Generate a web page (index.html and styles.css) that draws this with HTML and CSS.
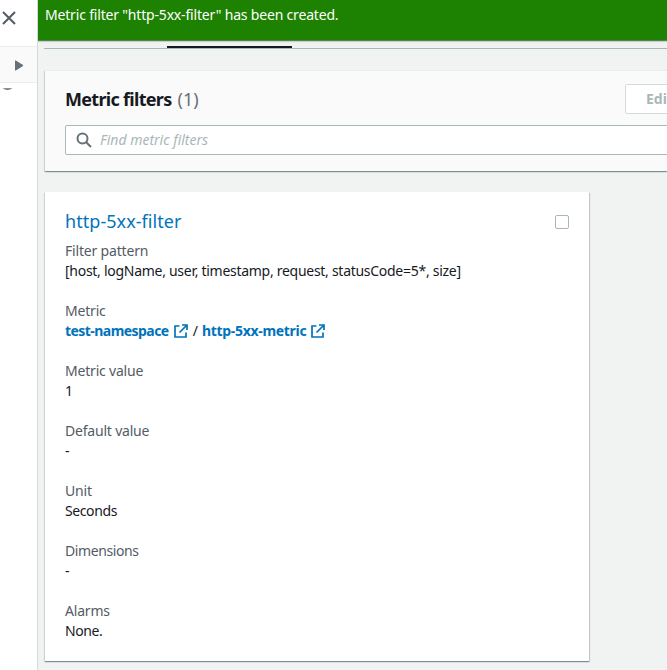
FILE: index.html
```html
<!DOCTYPE html>
<html lang="en">
<head>
<meta charset="utf-8">
<title>Metric filters</title>
<link rel="stylesheet" href="styles.css">
</head>
<body>
<div class="app">
  <aside class="rail">
    <div class="rail-close"><svg width="14" height="14" viewBox="0 0 14 14"><path d="M1 1l12 12M13 1L1 13" fill="none" stroke="#545b64" stroke-width="2"/></svg></div>
    <div class="rail-expand"><svg width="9" height="11" viewBox="0 0 9 11"><path d="M.5.8L8 5.500.5 10.200z" fill="#687078" stroke="#687078" stroke-linejoin="round"/></svg></div>
    <svg class="rail-arc" width="12" height="3" viewBox="0 0 12 3"><path d="M.5.300Q5.500 3.500 10.500.300z" fill="#687078"/></svg>
  </aside>
  <main class="main">
    <div class="banner"><span class="t-banner">Metric filter "http-5xx-filter" has been created.</span></div>
    <div class="tabs"><div class="tab-active"></div></div>
    <section class="panel header">
      <div class="title-row">
        <h2><span class="t-title">Metric filters</span><span class="count">(1)</span></h2>
        <button class="edit" disabled>Edit</button>
      </div>
      <div class="search">
        <svg width="16" height="16" viewBox="0 0 16 16"><g fill="none" stroke="#687078" stroke-width="2"><circle cx="6.500" cy="6.500" r="5"/><path d="M10.200 10.200L15 15"/></g></svg>
        <span class="t-find">Find metric filters</span>
      </div>
    </section>
    <section class="panel card">
      <div class="card-head"><a class="t-name">http-5xx-filter</a><span class="check"></span></div>
      <dl>
        <dt><span class="k1">Filter pattern</span></dt><dd><span class="v1">[host, logName, user, timestamp, request, statusCode=5*, size]</span></dd>
        <dt><span class="k2">Metric</span></dt>
        <dd class="links"><a class="l1">test-namespace</a><svg width="14" height="14" viewBox="0 0 14 14"><path d="M5.500 2H1v11h11V8.500M8 1h5v5M13 1L5.500 8.500" fill="none" stroke="#0073bb" stroke-width="1.700"/></svg><span class="slash">/</span><a class="l2">http-5xx-metric</a><svg width="14" height="14" viewBox="0 0 14 14"><path d="M5.500 2H1v11h11V8.500M8 1h5v5M13 1L5.500 8.500" fill="none" stroke="#0073bb" stroke-width="1.700"/></svg></dd>
        <dt><span class="k3">Metric value</span></dt><dd>1</dd>
        <dt><span class="k4">Default value</span></dt><dd>-</dd>
        <dt><span class="k5">Unit</span></dt><dd><span class="v5">Seconds</span></dd>
        <dt><span class="k6">Dimensions</span></dt><dd>-</dd>
        <dt><span class="k7">Alarms</span></dt><dd><span class="v7">None.</span></dd>
      </dl>
    </section>
  </main>
</div>
</body>
</html>
```
FILE: styles.css
```css
* { box-sizing: border-box; }
body { margin: 0; font: 14px/20px "Noto Sans", sans-serif; color: #16191f; background: #f1f3f3; overflow: hidden; }
.app { display: flex; width: 667px; height: 670px; overflow: hidden; }
.rail { width: 38px; flex: none; background: #fff; border-right: 1px solid #d5dbdb; }
.rail-close { height: 46px; padding: 11px 0 0 2px; }
.rail-expand { height: 37px; padding: 13px 0 0 15px; background: #fafafa; border: solid #eaeded; border-width: 1px 0; }
.rail svg { display: block; }
.rail-arc { margin: 5px 0 0 2px; }
.main { flex: 1; min-width: 0; }
.banner { height: 41px; padding: 5px 7px; background: #1d8102; border-bottom: 1px solid #55834b; color: #fff; white-space: nowrap; box-shadow: 0 1px 1px #c7d1cb; }
.t-banner { letter-spacing: -.18px; }
.tabs { height: 8px; margin-left: 6px; border-bottom: 1px solid #aab7b8; padding: 5px 0 0 123px; }
.tab-active { width: 125px; height: 2px; background: #16191f; }
.panel { margin-left: 7px; box-shadow: 0 1px 1px rgba(0,28,36,.3), 1px 1px 1px rgba(0,28,36,.15), -1px 1px 1px rgba(0,28,36,.1); }
.header { height: 101px; margin-top: 21px; background: #fafafa; border-top: 1px solid #eaeded; padding: 13px 0 0 20px; }
.title-row { display: flex; justify-content: space-between; height: 41px; }
h2 { margin: 0; font-size: 18px; line-height: 30px; font-weight: 700; white-space: nowrap; }
.t-title { letter-spacing: -.7px; }
.count { font-weight: 400; color: #687078; margin-left: 6px; }
.edit { width: 80px; height: 30px; margin-right: -38px; padding: 0 0 0 20px; text-align: left; background: #fff; border: 1px solid #d5dbdb; border-radius: 2px; font: 700 14px/28px "Noto Sans", sans-serif; color: #aab7b8; }
.search { display: flex; align-items: center; height: 30px; margin-right: -4px; padding-left: 10px; gap: 8px; background: #fff; border: 1px solid #aab7b8; border-radius: 2px; color: #aab7b8; font-style: italic; }
.card { width: 544px; height: 469px; margin-top: 21px; padding: 20px; background: #fff; }
.card-head { display: flex; justify-content: space-between; height: 29px; line-height: 19px; }
.t-name { font-size: 18px; letter-spacing: .05px; color: #0073bb; }
.check { width: 14px; height: 14px; margin-top: 3px; border: 1px solid #aab7b8; border-radius: 2px; }
dl, dd { margin: 0; }
dt { color: #545b64; height: 20px; letter-spacing: -.2px; }
dd { height: 20px; margin-bottom: 20px; white-space: nowrap; }
.k1 { letter-spacing: -.18px; }
.k6 { letter-spacing: -.4px; }
.v1 { letter-spacing: -.28px; }
.v5, .v7 { letter-spacing: -.4px; }
.links { display: flex; align-items: center; font-weight: 700; }
.links a { color: #0073bb; }
.links .l1 { letter-spacing: -.55px; margin-right: 5px; }
.links .l2 { letter-spacing: -.3px; margin-right: 5px; }
.slash { margin: 0 4px 0 5px; font-weight: 400; }
```
